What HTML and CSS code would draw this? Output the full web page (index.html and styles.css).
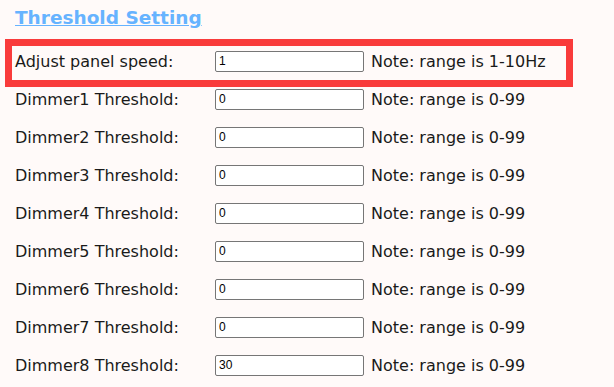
FILE: index.html
```html
<!DOCTYPE html>
<html lang="en">
<head>
  <meta charset="UTF-8">
  <meta name="viewport" content="width=device-width, initial-scale=1.0">
  <title>Threshold Setting</title>
  <link rel="stylesheet" href="styles.css">
</head>
<body>
  <h2 class="section-title">Threshold Setting</h2>

  <form class="settings" id="thresholdForm">
    <div class="row highlight">
      <label for="speed">Adjust panel speed:</label>
      <input type="text" id="speed" name="speed" value="1">
      <span class="note">Note: range is 1-10Hz</span>
    </div>
    <div class="row">
      <label for="dim1">Dimmer1 Threshold:</label>
      <input type="text" id="dim1" name="dim1" value="0">
      <span class="note">Note: range is 0-99</span>
    </div>
    <div class="row">
      <label for="dim2">Dimmer2 Threshold:</label>
      <input type="text" id="dim2" name="dim2" value="0">
      <span class="note">Note: range is 0-99</span>
    </div>
    <div class="row">
      <label for="dim3">Dimmer3 Threshold:</label>
      <input type="text" id="dim3" name="dim3" value="0">
      <span class="note">Note: range is 0-99</span>
    </div>
    <div class="row">
      <label for="dim4">Dimmer4 Threshold:</label>
      <input type="text" id="dim4" name="dim4" value="0">
      <span class="note">Note: range is 0-99</span>
    </div>
    <div class="row">
      <label for="dim5">Dimmer5 Threshold:</label>
      <input type="text" id="dim5" name="dim5" value="0">
      <span class="note">Note: range is 0-99</span>
    </div>
    <div class="row">
      <label for="dim6">Dimmer6 Threshold:</label>
      <input type="text" id="dim6" name="dim6" value="0">
      <span class="note">Note: range is 0-99</span>
    </div>
    <div class="row">
      <label for="dim7">Dimmer7 Threshold:</label>
      <input type="text" id="dim7" name="dim7" value="0">
      <span class="note">Note: range is 0-99</span>
    </div>
    <div class="row">
      <label for="dim8">Dimmer8 Threshold:</label>
      <input type="text" id="dim8" name="dim8" value="30">
      <span class="note">Note: range is 0-99</span>
    </div>
  </form>
</body>
</html>
```

FILE: styles.css
```css
body {
  background-color: #fffaf9;
  color: #1a1a1a;
  font-family: "DejaVu Sans", Verdana, sans-serif;
  font-size: 16px;
  margin: 0;
  padding: 0 5px;
}

.section-title {
  color: #66b3ff;
  font-size: 18.5px;
  font-weight: bold;
  text-decoration: underline;
  margin: 0;
  padding: 7px 0 0 10px;
  height: 39px;
  box-sizing: border-box;
}

.settings {
  margin: 0;
}

.row {
  display: flex;
  align-items: center;
  height: 20px;
  padding: 2px 0 16px 10px;
}

.row.highlight {
  border: 7px solid #f93b3b;
  padding: 5px 0 9px 3px;
  box-sizing: content-box;
  width: 551px;
}

.row label {
  width: 200px;
  flex-shrink: 0;
}

.row input {
  width: 149px;
  height: 21px;
  box-sizing: border-box;
  border: 1px solid #767676;
  border-radius: 2px;
  background-color: #fff;
  padding: 1px 3px;
  font-family: "Liberation Sans", Arial, sans-serif;
  font-size: 12px;
  color: #000;
  margin: 0;
}

.note {
  margin-left: 7px;
}
```
